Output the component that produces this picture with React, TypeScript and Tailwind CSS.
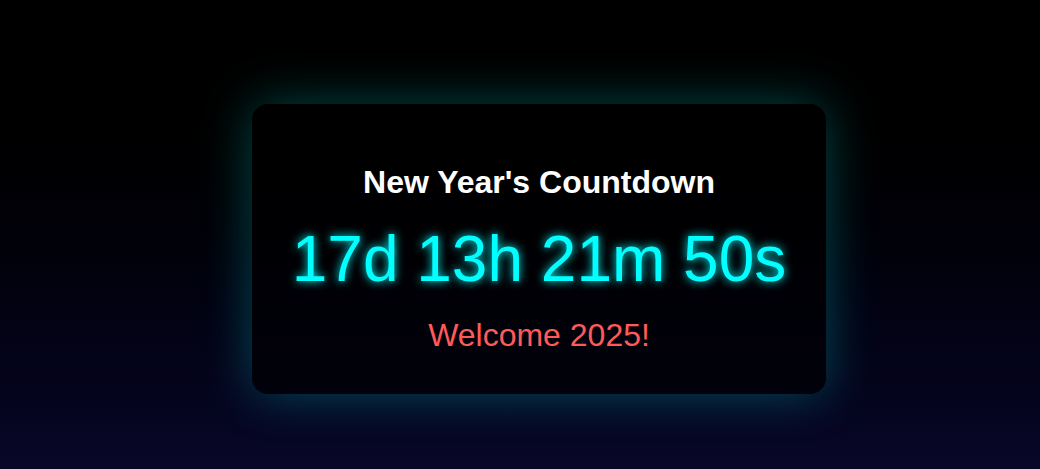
import React from "react";

export default function App() {
  return (
    <div
      className="w-full h-[469px] bg-gradient-to-b from-black to-[#080728] flex items-center justify-center pl-[38px] pt-[29px]"
      style={{ fontFamily: '"Liberation Sans", Arial, sans-serif' }}
    >
      <div className="w-[574px] rounded-[16px] bg-black/60 shadow-[0_0_50px_rgba(0,255,255,0.28)] flex flex-col items-center pt-[60px] pb-[40px] text-center">
        <h1 className="text-[32px] leading-[37px] font-bold text-white">New Year's Countdown</h1>
        <div className="mt-[21px] text-[64px] leading-[74px] text-[#00ffff] [text-shadow:0_0_10px_#00ffff]">
          17d 13h 21m 50s
        </div>
        <div className="mt-[21px] text-[32px] leading-[37px] text-[#ff5a5a]">Welcome 2025!</div>
      </div>
    </div>
  );
}
